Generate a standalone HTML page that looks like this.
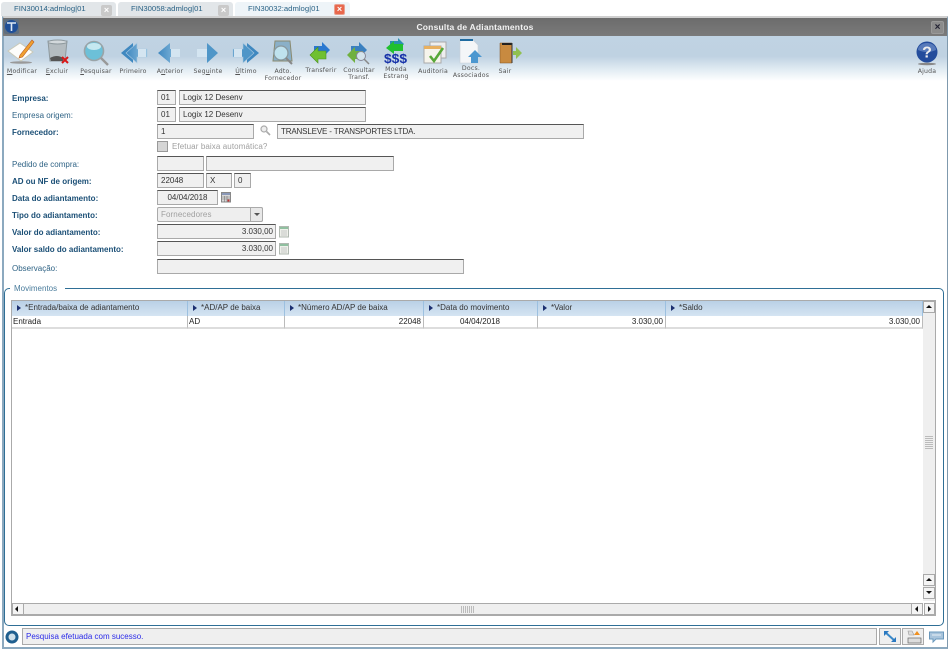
<!DOCTYPE html>
<html><head><meta charset="utf-8"><style>
html,body{margin:0;padding:0;background:#fff;width:948px;height:649px;overflow:hidden}
body{position:relative;font-family:"Liberation Sans",sans-serif;font-size:8px;color:#333}
.a,.l,.f,.t,.h,.c{position:absolute;white-space:nowrap;box-sizing:border-box}
.l{left:12px;color:#2f6385;font-size:8px;line-height:11px}
.l.b{font-weight:bold;color:#1b4f76}
.f{background:#f0f0f0;border:1px solid #a9a9a9;border-top:1px solid #555;line-height:14px;padding:0 3px;height:15px;color:#333;font-size:8px}
.t{font-size:6.2px;color:#555;text-align:center;line-height:7px;letter-spacing:.2px;font-family:"DejaVu Sans",sans-serif;width:60px}
.tab{position:absolute;top:2px;height:14px;background:#e6edf1;border-radius:3px 3px 0 0;color:#2a6285;font-size:7.7px;line-height:14px}
.x{position:absolute;width:11px;height:11px;top:3px;border-radius:2px;background:#c9c9c9;color:#fff;font-size:9px;line-height:10px;text-align:center;font-weight:bold}
.h{top:301px;height:15px;background:linear-gradient(#b9d0e6,#d5e4f2);border-right:1px solid #9cc0e0;color:#333;line-height:13px;padding-left:13px;font-size:8px}
.h:before{content:"";position:absolute;left:5px;top:4px;border-left:4px solid #1b2f70;border-top:3px solid transparent;border-bottom:3px solid transparent}
.c{top:316px;height:13px;border-right:1px solid #bbb;border-bottom:2px solid #ddd;line-height:12px;padding:0 2px 0 1px;font-size:8px;color:#222}
.sb{position:absolute;background:#efefef;border:1px solid #aaa;box-sizing:border-box}
svg{position:absolute;overflow:visible}
</style></head><body>

<div class="tab" style="left:1px;width:115px;background:#e2e6e9"><span style="position:absolute;left:13px">FIN30014:admlog|01</span><div class="x" style="left:100px">×</div></div>
<div class="tab" style="left:118px;width:115px;background:#e2e6e9"><span style="position:absolute;left:13px">FIN30058:admlog|01</span><div class="x" style="left:100px">×</div></div>
<div class="tab" style="left:235px;width:115px;background:#eef4f8"><span style="position:absolute;left:13px">FIN30032:admlog|01</span><div class="x" style="left:99px;top:2px;background:#e8674c;border:1px solid #e8a090;box-sizing:border-box;line-height:9px">×</div></div>

<div class="a" style="left:2px;top:16px;width:946px;height:633px;border-left:2px solid #8ca9bf;border-right:1px solid #7f99ad;border-bottom:2px solid #8ca9bf;border-top:2px solid #cfcfcf"></div>
<div class="a" style="left:3px;top:18px;width:944px;height:18px;background:linear-gradient(#6c6c6c,#7a7a7a);color:#f2f2f2;text-align:center;font-weight:bold;font-size:8.5px;line-height:18px;letter-spacing:.2px">Consulta de Adiantamentos</div>
<svg style="left:4px;top:19px" width="15" height="15" viewBox="0 0 15 15"><rect x="0" y="0" width="15" height="15" fill="#5f6f80" rx="2"/><circle cx="7.5" cy="7.5" r="6.5" fill="#1f4f98"/><path d="M3 4h9M7.5 4v8" stroke="#dce8f4" stroke-width="1.6"/></svg>
<div class="a" style="left:931px;top:21px;width:13px;height:13px;background:#8b8b8b;border:1px solid #999;border-radius:2px;color:#223;font-weight:bold;font-size:10px;line-height:11px;text-align:center">×</div>

<div class="a" style="left:4px;top:36px;width:943px;height:45px;background:linear-gradient(#c0d3e3 0,#bfd2e2 45%,#e2ecf3 75%,#fff 100%)"></div>

<svg width="0" height="0" style="left:0;top:0"><defs><linearGradient id="ar" x1="0" x2="1" y1="0" y2="0"><stop offset="0" stop-color="#3f88c0"/><stop offset="1" stop-color="#8fc0e0"/></linearGradient></defs></svg>

<!-- toolbar icons -->
<svg style="left:7px;top:38px" width="28" height="27" viewBox="0 0 28 27"><ellipse cx="14" cy="24.5" rx="11" ry="1.3" fill="#999"/><path d="M1 13 13 5 26 14 14 23Z" fill="#fdfdfb" stroke="#c9c9b8"/><path d="M13 17 25 2 27 4 15.5 19 12 20Z" fill="#f0a030" stroke="#b85a20" stroke-width=".6"/></svg>
<svg style="left:47px;top:39px" width="23" height="25" viewBox="0 0 23 25"><path d="M1 2h19l-2 20H3Z" fill="#b4bcc0" stroke="#8e999e"/><ellipse cx="10.5" cy="3" rx="9.5" ry="2" fill="#d3d9dc" stroke="#8e999e"/><path d="M3 19q7-4 13 0v3H4Z" fill="#555"/><path d="M15 18l6 6M21 18l-6 6" stroke="#d81818" stroke-width="2"/></svg>
<svg style="left:83px;top:40px" width="27" height="26" viewBox="0 0 27 26"><circle cx="11" cy="11" r="9.5" fill="#6cc0d8" stroke="#9aa4a8" stroke-width="1.6"/><ellipse cx="11" cy="6.5" rx="7" ry="3.5" fill="#c5e8f0"/><path d="M18 18l7 7" stroke="#999" stroke-width="2.4"/></svg>
<svg style="left:121px;top:42px" width="26" height="22" viewBox="0 0 26 22"><path d="M0 11 12 1v20Z" fill="#3f88c0"/><path d="M5 11 16 1v6h10v8H16v6Z" fill="url(#ar)" stroke="#a9c8e0" stroke-width=".6"/><path d="M17 7h8v8h-8Z" fill="#d4e5f1"/></svg>
<svg style="left:158px;top:42px" width="23" height="22" viewBox="0 0 23 22"><path d="M0 11 12 1v6h10v8H12v6Z" fill="url(#ar)"/><path d="M13 7h9v8h-9Z" fill="#d4e5f1"/></svg>
<svg style="left:196px;top:42px" width="23" height="22" viewBox="0 0 23 22"><path d="M22 11 11 1v6H1v8h10v6Z" fill="#4f96c8"/><path d="M1 7h10v8H1Z" fill="#d4e5f1"/></svg>
<svg style="left:233px;top:42px" width="26" height="22" viewBox="0 0 26 22"><path d="M26 11 14 1v20Z" fill="#3f88c0"/><path d="M21 11 10 1v6H0v8h10v6Z" fill="#4f96c8" stroke="#a9c8e0" stroke-width=".6"/><path d="M1 7h8v8H1Z" fill="#d4e5f1"/></svg>
<svg style="left:270px;top:40px" width="25" height="26" viewBox="0 0 25 26"><path d="M5 1h15l2 20H3Z" fill="#8ab0c8" stroke="#8a8a70"/><circle cx="11" cy="13" r="7" fill="#bfe2ee" stroke="#88989e" stroke-width="1.3"/><path d="M16 18l6 6" stroke="#888" stroke-width="2"/></svg>
<svg style="left:309px;top:41px" width="22" height="24" viewBox="0 0 22 24"><path d="M21 9 13 1v4H5v8h8v4Z" fill="#2a78d0"/><path d="M1 14 9 6v4h8v8H9v4Z" fill="#70c030" stroke="#4a9020" stroke-width=".6"/></svg>
<svg style="left:346px;top:41px" width="25" height="25" viewBox="0 0 25 25"><path d="M21 9 13 1v4H5v8h8v4Z" fill="#3a80c0"/><path d="M1 14 9 6v4h8v8H9v4Z" fill="#70b040"/><circle cx="15" cy="15" r="4.5" fill="#d4e4ec" stroke="#889"/><path d="M18 18l5 5" stroke="#888" stroke-width="1.5"/></svg>
<svg style="left:384px;top:37px" width="24" height="27" viewBox="0 0 24 27"><path d="M20 7 14 1v3H6v7h8v3Z" fill="#2a90b0"/><path d="M2 11 10 4v3h9v7h-9v3Z" fill="#20c030"/><text x="0" y="26" font-family="Liberation Sans,sans-serif" font-weight="bold" font-size="13" fill="#1530a8" textLength="23" lengthAdjust="spacingAndGlyphs">$$$</text></svg>
<svg style="left:422px;top:41px" width="26" height="25" viewBox="0 0 26 25"><path d="M8 1h16v16H8Z" fill="#eee" stroke="#aaa"/><path d="M2 5h17v17H2Z" fill="#f6f4ec" stroke="#aaa"/><path d="M2 5h17v3H2Z" fill="#e8b060"/><path d="M8 15l4 5 9-13" fill="none" stroke="#58a838" stroke-width="2.6"/></svg>
<svg style="left:460px;top:39px" width="24" height="27" viewBox="0 0 24 27"><path d="M0 0h12l6 6v18H0Z" fill="#f4f6f8" stroke="#c8d0d8" stroke-width=".6"/><path d="M0 0h13v2H0Z" fill="#1f6ba0"/><path d="M15 11 22 18h-4v6h-7v-6H8Z" fill="#4b97d0"/></svg>
<svg style="left:499px;top:42px" width="24" height="24" viewBox="0 0 24 24"><path d="M1 1h12v20H1Z" fill="#c88a40" stroke="#805020" stroke-width=".5"/><path d="M3 1h10v2H3Z" fill="#222"/><path d="M13 1v20" stroke="#333"/><path d="M14 9h3V5l6 6-6 6v-4h-3Z" fill="#90c050"/></svg>
<svg style="left:916px;top:41px" width="22" height="25" viewBox="0 0 22 25"><ellipse cx="11" cy="23" rx="9" ry="1.2" fill="#888"/><circle cx="11" cy="11" r="10.5" fill="#234c9c"/><path d="M2 9a9 7 0 0 1 18 0q-9 4-18 0Z" fill="#6e8fc8" opacity=".7"/><text x="11" y="16.5" text-anchor="middle" font-family="Liberation Sans,sans-serif" font-weight="bold" font-size="16" fill="#eee">?</text></svg>

<div class="t" style="left:-8px;top:68px"><u>M</u>odificar</div>
<div class="t" style="left:27px;top:68px"><u>E</u>xcluir</div>
<div class="t" style="left:66px;top:68px"><u>P</u>esquisar</div>
<div class="t" style="left:103px;top:68px">Primeiro</div>
<div class="t" style="left:140px;top:68px">A<u>n</u>terior</div>
<div class="t" style="left:178px;top:68px">Seg<u>u</u>inte</div>
<div class="t" style="left:216px;top:68px"><u>Ú</u>ltimo</div>
<div class="t" style="left:253px;top:68px">Adto.<br>Fornecedor</div>
<div class="t" style="left:291px;top:67px">Transferir</div>
<div class="t" style="left:329px;top:67px">Consultar<br>Transf.</div>
<div class="t" style="left:366px;top:66px">Moeda<br>Estrang</div>
<div class="t" style="left:403px;top:68px">Auditoria</div>
<div class="t" style="left:441px;top:65px">Docs.<br>Associados</div>
<div class="t" style="left:475px;top:68px">Sair</div>
<div class="t" style="left:897px;top:68px">Ajuda</div>

<!-- labels -->
<div class="l b" style="top:93px">Empresa:</div>
<div class="l" style="top:110px">Empresa origem:</div>
<div class="l b" style="top:127px">Fornecedor:</div>
<div class="l" style="top:159px">Pedido de compra:</div>
<div class="l b" style="top:176px">AD ou NF de origem:</div>
<div class="l b" style="top:193px">Data do adiantamento:</div>
<div class="l b" style="top:210px">Tipo do adiantamento:</div>
<div class="l b" style="top:227px">Valor do adiantamento:</div>
<div class="l b" style="top:244px">Valor saldo do adiantamento:</div>
<div class="l" style="top:263px">Observação:</div>

<!-- fields -->
<div class="f" style="left:157px;top:90px;width:19px">01</div>
<div class="f" style="left:179px;top:90px;width:187px">Logix 12 Desenv</div>
<div class="f" style="left:157px;top:107px;width:19px">01</div>
<div class="f" style="left:179px;top:107px;width:187px">Logix 12 Desenv</div>
<div class="f" style="left:157px;top:124px;width:97px">1</div>
<svg style="left:260px;top:125px" width="11" height="12" viewBox="0 0 11 12"><circle cx="4" cy="4" r="3" fill="#eee" stroke="#aaa" stroke-width="1.2"/><path d="M6.5 6.5 10 10" stroke="#aaa" stroke-width="1.6"/></svg>
<div class="f" style="left:277px;top:124px;width:307px;letter-spacing:-.15px">TRANSLEVE - TRANSPORTES LTDA.</div>
<div class="a" style="left:157px;top:141px;width:11px;height:11px;background:#d5d5d5;border:1px solid #999"></div>
<div class="a" style="left:172px;top:141px;color:#a0a0a0;line-height:11px;letter-spacing:.1px">Efetuar baixa automática?</div>
<div class="f" style="left:157px;top:156px;width:47px"></div>
<div class="f" style="left:206px;top:156px;width:188px"></div>
<div class="f" style="left:157px;top:173px;width:47px">22048</div>
<div class="f" style="left:206px;top:173px;width:26px">X</div>
<div class="f" style="left:234px;top:173px;width:17px">0</div>
<div class="f" style="left:157px;top:190px;width:61px;text-align:center">04/04/2018</div>
<svg style="left:221px;top:192px" width="10" height="11" viewBox="0 0 10 11"><rect x=".5" y=".5" width="9" height="9.5" fill="#d8d8d8" stroke="#888"/><rect x="1" y="1" width="8" height="2" fill="#8a98b8"/><path d="M1 5h8M1 7h8M3.5 4v6M6 4v6" stroke="#777" stroke-width=".6"/><rect x="6.5" y="7.5" width="2" height="2" fill="#c03030"/></svg>
<div class="a" style="left:157px;top:207px;width:106px;height:15px;background:#eee;border:1px solid #aaa;border-radius:2px;color:#a0a0a0;line-height:13px;padding-left:3px;letter-spacing:.1px">Fornecedores</div>
<div class="a" style="left:250px;top:207px;width:13px;height:15px;border:1px solid #aaa;border-radius:0 2px 2px 0;background:#e8e8e8"></div>
<div class="a" style="left:254px;top:213px;border-top:3px solid #555;border-left:3px solid transparent;border-right:3px solid transparent"></div>
<div class="f" style="left:157px;top:224px;width:119px;text-align:right;padding-right:2px">3.030,00</div>
<svg style="left:279px;top:226px" width="10" height="12" viewBox="0 0 10 12"><rect x=".5" y=".5" width="9" height="10.5" fill="#eef0ea" stroke="#b0b8b0"/><rect x="1" y="1" width="8" height="2" fill="#90c0a0"/><path d="M2 5h6M2 7h6M2 9h6" stroke="#bbb" stroke-width=".7"/></svg>
<div class="f" style="left:157px;top:241px;width:119px;text-align:right;padding-right:2px">3.030,00</div>
<svg style="left:279px;top:243px" width="10" height="12" viewBox="0 0 10 12"><rect x=".5" y=".5" width="9" height="10.5" fill="#eef0ea" stroke="#b0b8b0"/><rect x="1" y="1" width="8" height="2" fill="#90c0a0"/><path d="M2 5h6M2 7h6M2 9h6" stroke="#bbb" stroke-width=".7"/></svg>
<div class="f" style="left:157px;top:259px;width:307px"></div>

<!-- group box -->
<div class="a" style="left:4px;top:288px;width:940px;height:338px;border:1px solid #2f6f96;border-radius:5px"></div>
<div class="a" style="left:10px;top:283px;width:55px;height:12px;background:#fff;color:#4a7c9c;line-height:12px;padding-left:4px">Movimentos</div>

<!-- grid -->
<div class="a" style="left:11px;top:300px;width:925px;height:316px;border:1px solid #aaa;background:#fff"></div>
<div class="h" style="left:12px;width:176px">*Entrada/baixa de adiantamento</div>
<div class="h" style="left:188px;width:97px">*AD/AP de baixa</div>
<div class="h" style="left:285px;width:139px">*Número AD/AP de baixa</div>
<div class="h" style="left:424px;width:114px">*Data do movimento</div>
<div class="h" style="left:538px;width:128px">*Valor</div>
<div class="h" style="left:666px;width:257px">*Saldo</div>
<div class="c" style="left:12px;width:176px">Entrada</div>
<div class="c" style="left:188px;width:97px">AD</div>
<div class="c" style="left:285px;width:139px;text-align:right">22048</div>
<div class="c" style="left:424px;width:114px;text-align:center">04/04/2018</div>
<div class="c" style="left:538px;width:128px;text-align:right">3.030,00</div>
<div class="c" style="left:666px;width:257px;text-align:right">3.030,00</div>

<!-- v scrollbar -->
<div class="sb" style="left:923px;top:301px;width:12px;height:300px;border:0;background:#efefef"></div>
<div class="sb" style="left:923px;top:301px;width:12px;height:12px;background:#f4f4f4"></div>
<div class="a" style="left:926px;top:305px;border-bottom:3px solid #111;border-left:3px solid transparent;border-right:3px solid transparent"></div>
<div class="sb" style="left:923px;top:574px;width:12px;height:12px;background:#f4f4f4"></div>
<div class="a" style="left:926px;top:578px;border-bottom:3px solid #111;border-left:3px solid transparent;border-right:3px solid transparent"></div>
<div class="sb" style="left:923px;top:587px;width:12px;height:12px;background:#f4f4f4"></div>
<div class="a" style="left:926px;top:591px;border-top:3px solid #111;border-left:3px solid transparent;border-right:3px solid transparent"></div>
<div class="a" style="left:925px;top:436px;width:8px;height:13px;background:repeating-linear-gradient(#bbb 0 1px,#efefef 1px 2px)"></div>

<!-- h scrollbar -->
<div class="sb" style="left:12px;top:603px;width:911px;height:12px"></div>
<div class="sb" style="left:12px;top:603px;width:12px;height:12px;background:#f4f4f4"></div>
<div class="a" style="left:15px;top:606px;border-right:3px solid #111;border-top:3px solid transparent;border-bottom:3px solid transparent"></div>
<div class="sb" style="left:911px;top:603px;width:12px;height:12px;background:#f4f4f4"></div>
<div class="a" style="left:915px;top:606px;border-right:3px solid #111;border-top:3px solid transparent;border-bottom:3px solid transparent"></div>
<div class="sb" style="left:924px;top:603px;width:11px;height:12px;background:#f4f4f4"></div>
<div class="a" style="left:928px;top:606px;border-left:3px solid #111;border-top:3px solid transparent;border-bottom:3px solid transparent"></div>
<div class="a" style="left:461px;top:606px;width:13px;height:7px;background:repeating-linear-gradient(90deg,#bbb 0 1px,#efefef 1px 2px)"></div>

<!-- status bar -->
<svg style="left:5px;top:630px" width="14" height="14" viewBox="0 0 14 14"><circle cx="7" cy="7" r="6.5" fill="#1f5f8f"/><circle cx="7" cy="7" r="3.5" fill="#cfe0ea"/></svg>
<div class="a" style="left:22px;top:628px;width:855px;height:17px;background:#efefef;border:1px solid #aaa;color:#2a2ae8;line-height:15px;padding-left:3px;font-size:8px">Pesquisa efetuada com sucesso.</div>
<div class="a" style="left:879px;top:628px;width:22px;height:17px;background:#efefef;border:1px solid #aaa"></div>
<svg style="left:884px;top:631px" width="12" height="11" viewBox="0 0 12 11"><path d="M1 1l10 9" stroke="#3a88c8" stroke-width="2"/><path d="M0 0h5L0 5ZM12 11H7l5-5Z" fill="#2a78c0"/></svg>
<div class="a" style="left:902px;top:628px;width:22px;height:17px;background:#efefef;border:1px solid #aaa"></div>
<svg style="left:905px;top:630px" width="17" height="14" viewBox="0 0 17 14"><path d="M3 1h4l2 4H4Z" fill="#ddd" stroke="#999" stroke-width=".6"/><path d="M9 5h6l-3-4Z" fill="#f09020"/><rect x="3" y="8" width="13" height="5" fill="#ddd" stroke="#666" stroke-width=".7"/></svg>
<svg style="left:928px;top:631px" width="17" height="13" viewBox="0 0 17 13"><path d="M1.5 1h14v7H8l-3 3V8H1.5Z" fill="#a8c4dc" stroke="#6a98bc"/><path d="M4 4h9" stroke="#e8f0f6"/></svg>

</body></html>
